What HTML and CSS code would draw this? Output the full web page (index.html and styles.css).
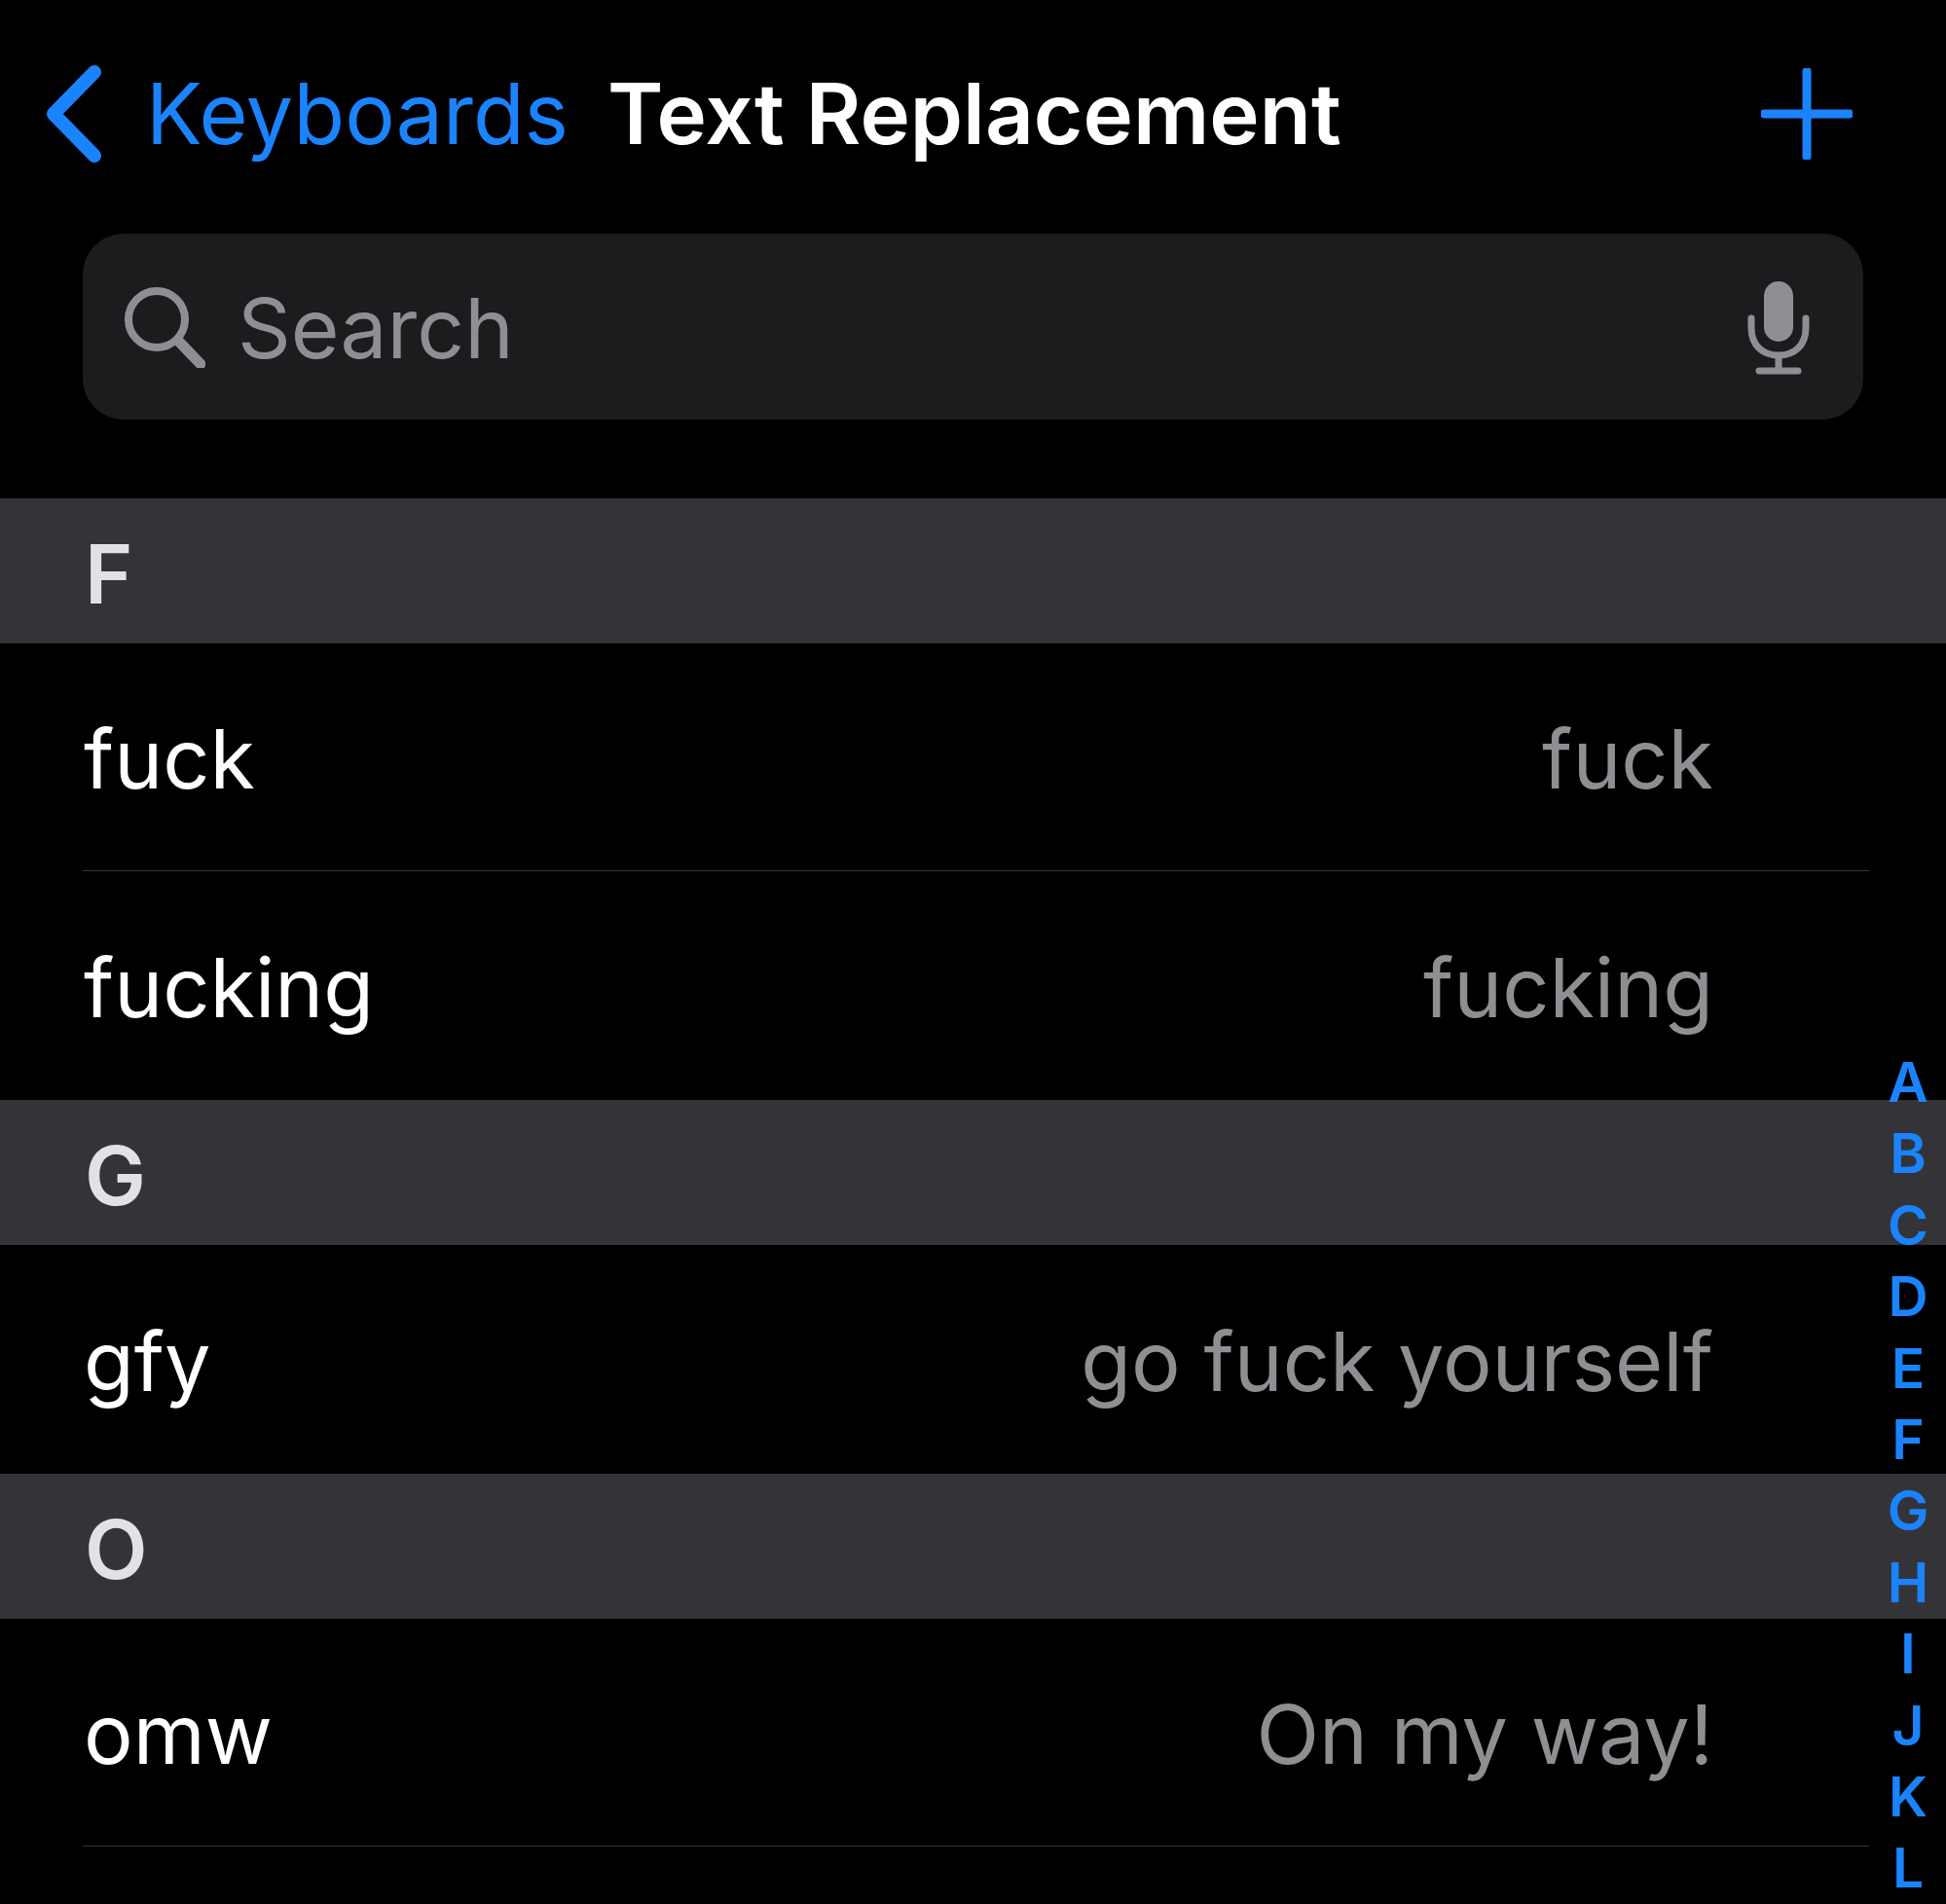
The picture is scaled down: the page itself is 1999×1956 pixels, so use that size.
FILE: index.html
```html
<!DOCTYPE html>
<html>
<head>
	<meta charset="utf-8">
	<title>Text Replacement</title>
	<link rel="stylesheet" href="styles.css">
</head>
<body>
<div class="screen">
	<div class="nav">
		<svg class="back-icon" viewBox="0 0 62 102"><path d="M52 8 L10 51 L52 94" /></svg>
		<span class="back-label">Keyboards</span>
		<span class="nav-title">Text Replacement</span>
		<svg class="plus-icon" viewBox="0 0 94 94"><path d="M47 3 V91 M3 47 H91" /></svg>
	</div>
	<div class="search-wrap">
		<div class="search">
			<svg class="search-icon" viewBox="0 0 84 84"><circle cx="34" cy="34" r="29" /><path class="search-handle" d="M56 56 L79 80" /></svg>
			<span class="search-text">Search</span>
			<svg class="mic-icon" viewBox="0 0 64 96">
				<rect class="mic-head" x="17" y="0" width="30" height="62" rx="15" />
				<path d="M4 38 V48 C4 66 16 76 32 76 C48 76 60 66 60 48 V38 M32 76 V92 M12 92 H52" />
			</svg>
		</div>
	</div>

	<div class="section">F</div>
	<div class="row"><span class="short">fuck</span><span class="phrase">fuck</span></div>
	<div class="row no-line"><span class="short">fucking</span><span class="phrase">fucking</span></div>
	<div class="section">G</div>
	<div class="row no-line"><span class="short">gfy</span><span class="phrase">go fuck yourself</span></div>
	<div class="section">O</div>
	<div class="row"><span class="short">omw</span><span class="phrase">On my way!</span></div>

	<div class="index">
		<span>A</span><span>B</span><span>C</span><span>D</span><span>E</span><span>F</span>
		<span>G</span><span>H</span><span>I</span><span>J</span><span>K</span><span>L</span>
	</div>
</div>
</body>
</html>
```

FILE: styles.css
```css
html, body{
	margin: 0;
	background: #000;
}
.screen{
	position: relative;
	width: 1999px;
	height: 1956px;
	overflow: hidden;
	background: #000;
	font-family: "Inter", "Liberation Sans", sans-serif;
}
.nav{
	height: 240px;
	box-sizing: border-box;
	padding: 66px 96px 0 45px;
	display: flex;
	align-items: flex-start;
}
.back-icon{
	width: 62px;
	height: 102px;
	fill: none;
	stroke: #1a84ff;
	stroke-width: 14;
	stroke-linecap: round;
	stroke-linejoin: round;
}
.back-label{
	margin-left: 43px;
	font-size: 86px;
	line-height: 102px;
	color: #1a84ff;
}
.nav-title{
	margin-left: 40px;
	font-size: 87px;
	line-height: 102px;
	font-weight: 600;
	color: #fff;
}
.plus-icon{
	margin-left: auto;
	width: 94px;
	height: 94px;
	margin-top: 4px;
	fill: none;
	stroke: #1a84ff;
	stroke-width: 9;
	stroke-linecap: round;
}
.search-wrap{
	padding: 0 85px;
	height: 272px;
}
.search{
	height: 191px;
	background: #1c1c1e;
	border-radius: 42px;
	display: flex;
	align-items: center;
	padding: 0 55px 0 42px;
}
.search-icon{
	width: 84px;
	height: 84px;
	fill: none;
	stroke: #8e8e93;
	stroke-width: 8;
	stroke-linecap: round;
}
.search-handle{
	stroke-width: 11;
}
.search-text{
	margin-left: 33px;
	padding-top: 2px;
	font-size: 85.5px;
	color: #8e8e93;
}
.mic-icon{
	margin-left: auto;
	width: 64px;
	height: 96px;
	margin-top: 2px;
	fill: none;
	stroke: #8e8e93;
	stroke-width: 7;
	stroke-linecap: round;
}
.mic-head{
	fill: #8e8e93;
	stroke: none;
}
.section{
	height: 149px;
	padding-left: 87px;
	background: #343438;
	color: #e2e2e4;
	font-size: 84px;
	font-weight: 600;
	line-height: 155px;
}
.row{
	height: 234px;
	margin-left: 85px;
	margin-right: 79px;
	padding-left: 1px;
	padding-right: 160px;
	padding-top: 3px;
	box-sizing: border-box;
	display: flex;
	justify-content: space-between;
	align-items: center;
	border-bottom: 1px solid #38383a;
	font-size: 84.5px;
}
.no-line{
	height: 235px;
	border-bottom: none;
}
.short{
	color: #fff;
}
.phrase{
	color: #8e8e93;
}
.index{
	position: absolute;
	top: 1075px;
	right: 17px;
	width: 44px;
	display: flex;
	flex-direction: column;
	align-items: center;
	color: #1a84ff;
	font-size: 57px;
	font-weight: 600;
	line-height: 73.4px;
}
```
